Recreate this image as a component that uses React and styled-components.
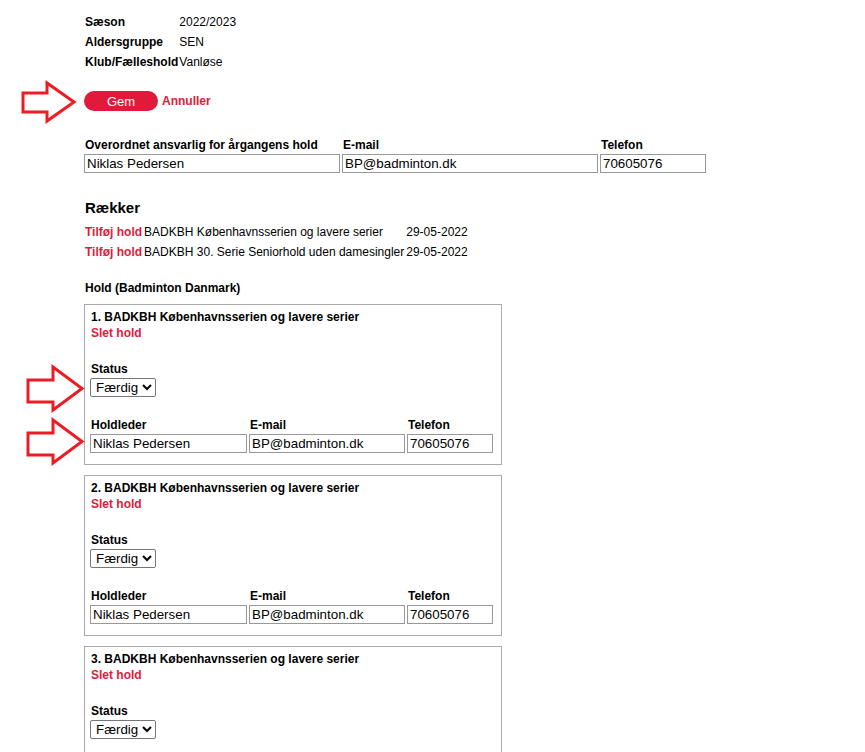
import React from 'react';
import styled, { createGlobalStyle } from 'styled-components';

const GlobalStyle = createGlobalStyle`
  body {
    margin: 0;
    background: #ffffff;
    font-family: 'Liberation Sans', Arial, sans-serif;
    font-size: 12px;
    color: #000000;
  }
`;

const Page = styled.div`
  position: relative;
  padding: 12px 0 0 84px;
`;

const InfoTable = styled.div`
  display: grid;
  grid-template-columns: auto auto;
  justify-content: start;
  column-gap: 1px;
  line-height: 20px;
  padding-left: 1px;
`;

const InfoLabel = styled.div`
  font-weight: bold;
`;

const ButtonRow = styled.div`
  display: flex;
  align-items: center;
  gap: 4px;
  margin-top: 19px;
`;

const SaveButton = styled.button`
  width: 74px;
  height: 20px;
  border: none;
  border-radius: 10px;
  background: #e11a3b;
  color: #ffffff;
  font-family: 'Liberation Sans', Arial, sans-serif;
  font-size: 13px;
  padding: 0;
  cursor: pointer;
`;

const RedLink = styled.a`
  color: #e11a3b;
  font-weight: bold;
  text-decoration: none;
  cursor: pointer;
`;

const FieldGrid = styled.div`
  display: grid;
  grid-template-columns: ${p => p.$cols};
  column-gap: 2px;
  row-gap: ${p => p.$rowGap || 1}px;
  margin-top: ${p => p.$top || 0}px;
`;

const FieldLabel = styled.div`
  font-weight: bold;
  line-height: 16px;
  padding-left: 1px;
`;

const TextInput = styled.input`
  box-sizing: border-box;
  width: 100%;
  height: 19px;
  border: 1px solid #999999;
  padding: 0 2px;
  font-family: 'Liberation Sans', Arial, sans-serif;
  font-size: 13.33px;
  color: #000000;
  outline: none;
`;

const Heading = styled.h3`
  margin: 26px 0 5px;
  padding-left: 1px;
  font-size: 15px;
  line-height: 18px;
  font-weight: bold;
`;

const SeriesTable = styled.div`
  display: grid;
  grid-template-columns: auto auto auto;
  justify-content: start;
  column-gap: 2px;
  line-height: 20px;
  padding-left: 1px;
`;

const SubHeading = styled.div`
  margin: 18px 0 8px;
  padding-left: 1px;
  font-weight: bold;
  line-height: 16px;
`;

const TeamBox = styled.div`
  box-sizing: border-box;
  width: 418px;
  border: 1px solid #aaaaaa;
  padding: 4px 6px 11px 5px;
  margin-bottom: 10px;
`;

const TeamTitle = styled.div`
  font-weight: bold;
  line-height: 16px;
  padding-left: 1px;
`;

const TeamDelete = styled(RedLink)`
  display: block;
  line-height: 16px;
  padding-left: 1px;
`;

const StatusBlock = styled.div`
  margin-top: 20px;
  display: flex;
  flex-direction: column;
  align-items: flex-start;
  gap: 1px;
`;

const StatusSelect = styled.select`
  box-sizing: border-box;
  width: 66px;
  height: 19px;
  font-family: 'Liberation Sans', Arial, sans-serif;
  font-size: 13.33px;
  color: #000000;
  border: 1px solid #767676;
  border-radius: 2px;
  background: #ffffff;
  padding: 0 1px;
  margin: 0;
`;

const ArrowSvg = styled.svg`
  position: absolute;
  left: 0;
  top: 0;
  pointer-events: none;
  overflow: visible;
`;

const Arrow = ({ x1, xHead, xTip, yTop, yShaftTop, yShaftBottom, yBottom }) => {
  const yMid = (yTop + yBottom) / 2;
  const pts = [
    [x1, yShaftTop], [xHead, yShaftTop], [xHead, yTop], [xTip, yMid],
    [xHead, yBottom], [xHead, yShaftBottom], [x1, yShaftBottom],
  ].map(p => p.join(',')).join(' ');
  return <polygon points={pts} fill="none" stroke="#ec1c24" strokeWidth="3" strokeLinejoin="miter" />;
};

const series = [
  { name: 'BADKBH Københavnsserien og lavere serier', date: '29-05-2022' },
  { name: 'BADKBH 30. Serie Seniorhold uden damesingler', date: '29-05-2022' },
];

const teams = [
  '1. BADKBH Københavnsserien og lavere serier',
  '2. BADKBH Københavnsserien og lavere serier',
  '3. BADKBH Københavnsserien og lavere serier',
];

export default function App() {
  return (
    <>
      <GlobalStyle />
      <Page>
        <InfoTable>
          <InfoLabel>Sæson</InfoLabel><div>2022/2023</div>
          <InfoLabel>Aldersgruppe</InfoLabel><div>SEN</div>
          <InfoLabel>Klub/Fælleshold</InfoLabel><div>Vanløse</div>
        </InfoTable>

        <ButtonRow>
          <SaveButton>Gem</SaveButton>
          <RedLink>Annuller</RedLink>
        </ButtonRow>

        <FieldGrid $cols="256px 256px 106px" $top={26}>
          <FieldLabel>Overordnet ansvarlig for årgangens hold</FieldLabel>
          <FieldLabel>E-mail</FieldLabel>
          <FieldLabel>Telefon</FieldLabel>
          <TextInput defaultValue="Niklas Pedersen" />
          <TextInput defaultValue="BP@badminton.dk" />
          <TextInput defaultValue="70605076" />
        </FieldGrid>

        <Heading>Rækker</Heading>
        <SeriesTable>
          {series.map((s, i) => (
            <React.Fragment key={i}>
              <RedLink>Tilføj hold</RedLink>
              <div>{s.name}</div>
              <div>{s.date}</div>
            </React.Fragment>
          ))}
        </SeriesTable>

        <SubHeading>Hold (Badminton Danmark)</SubHeading>

        {teams.map((t, i) => (
          <TeamBox key={i}>
            <TeamTitle>{t}</TeamTitle>
            <TeamDelete>Slet hold</TeamDelete>
            <StatusBlock>
              <FieldLabel>Status</FieldLabel>
              <StatusSelect defaultValue="Færdig">
                <option>Færdig</option>
                <option>Ikke færdig</option>
              </StatusSelect>
            </StatusBlock>
            <FieldGrid $cols="157px 156px 86px" $top={20} $rowGap={1}>
              <FieldLabel>Holdleder</FieldLabel>
              <FieldLabel>E-mail</FieldLabel>
              <FieldLabel>Telefon</FieldLabel>
              <TextInput defaultValue="Niklas Pedersen" />
              <TextInput defaultValue="BP@badminton.dk" />
              <TextInput defaultValue="70605076" />
            </FieldGrid>
          </TeamBox>
        ))}

        <ArrowSvg width="865" height="752">
          <Arrow x1={23} xHead={47} xTip={74} yTop={83} yShaftTop={93} yShaftBottom={112} yBottom={121} />
          <Arrow x1={28} xHead={53} xTip={82} yTop={367} yShaftTop={380} yShaftBottom={402} yBottom={410} />
          <Arrow x1={28} xHead={53} xTip={82} yTop={420} yShaftTop={433} yShaftBottom={455} yBottom={463} />
        </ArrowSvg>
      </Page>
    </>
  );
}
